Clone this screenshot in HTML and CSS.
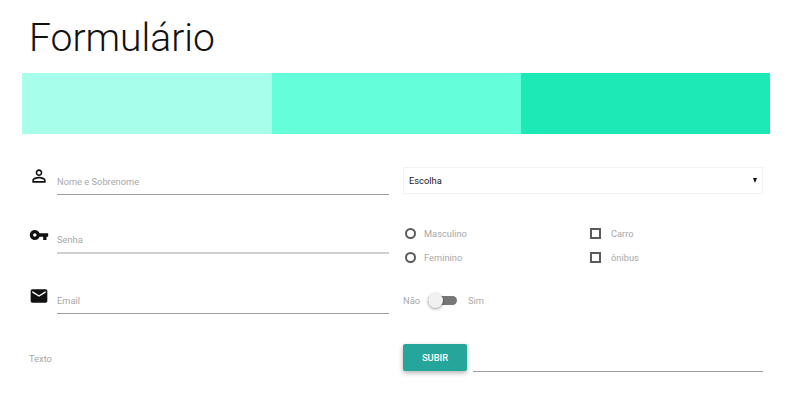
FILE: index.html
```html
<!DOCTYPE html>
<html lang="pt-BR">
<head>
    <meta charset="UTF-8">
    <meta name="viewport" content="width=device-width, initial-scale=1.0">
    <title>Formulário</title>
    <link rel="stylesheet" href="styles.css">
</head>
<body>
    <div class="container">
        <h1>Formulário</h1>
        <div class="bands">
            <div class="band band-light"></div>
            <div class="band band-mid"></div>
            <div class="band band-strong"></div>
        </div>
        <form class="form-grid">
            <div class="cell">
                <svg class="icon icon-person" viewBox="0 0 24 24"><path d="M12 5.9c1.16 0 2.1.94 2.1 2.1s-.94 2.1-2.1 2.1S9.9 9.16 9.9 8s.94-2.1 2.1-2.1m0 9c2.97 0 6.1 1.46 6.1 2.1v1.1H5.9V17c0-.64 3.13-2.1 6.1-2.1M12 4C9.79 4 8 5.79 8 8s1.79 4 4 4 4-1.79 4-4-1.79-4-4-4zm0 9c-2.67 0-8 1.34-8 4v3h16v-3c0-2.66-5.33-4-8-4z"/></svg>
                <input class="field" type="text" placeholder="Nome e Sobrenome">
            </div>
            <div class="cell">
                <div class="select-box">
                    <span>Escolha</span>
                    <span class="arrow"></span>
                </div>
            </div>

            <div class="cell">
                <svg class="icon" viewBox="0 0 24 24"><path d="M12.65 10C11.83 7.67 9.61 6 7 6c-3.31 0-6 2.69-6 6s2.69 6 6 6c2.61 0 4.83-1.67 5.65-4H17v4h4v-4h2v-4H12.65zM7 14c-1.1 0-2-.9-2-2s.9-2 2-2 2 .9 2 2-.9 2-2 2z"/></svg>
                <input class="field field-soft" type="password" placeholder="Senha">
            </div>
            <div class="cell">
                <div class="options">
                    <label class="option"><span class="radio"></span>Masculino</label>
                    <label class="option option-check"><span class="check"></span>Carro</label>
                    <label class="option"><span class="radio"></span>Feminino</label>
                    <label class="option option-check"><span class="check"></span>ônibus</label>
                </div>
            </div>

            <div class="cell">
                <svg class="icon" viewBox="0 0 24 24"><path d="M20 4H4c-1.1 0-1.99.9-1.99 2L2 18c0 1.1.9 2 2 2h16c1.1 0 2-.9 2-2V6c0-1.1-.9-2-2-2zm0 4l-8 5-8-5V6l8 5 8-5v2z"/></svg>
                <input class="field" type="email" placeholder="Email">
            </div>
            <div class="cell">
                <div class="switch">
                    <span>Não</span>
                    <span class="lever"></span>
                    <span>Sim</span>
                </div>
            </div>

            <div class="cell">
                <span class="text-label">Texto</span>
            </div>
            <div class="cell file-row">
                <button class="btn" type="button">SUBIR</button>
                <input class="file-path" type="text">
            </div>
        </form>
    </div>
</body>
</html>
```

FILE: styles.css
```css
* {
    box-sizing: border-box;
    margin: 0;
    padding: 0;
}

body {
    font-family: 'Roboto', sans-serif;
    background-color: #fff;
    color: #a8a8a8;
    font-size: 9.3px;
}

.container {
    padding: 0 30px 0 22px;
}

h1 {
    height: 73px;
    padding: 13px 0 0 7px;
    font-size: 39px;
    font-weight: 300;
    line-height: 50px;
    color: #111;
}

.bands {
    display: flex;
    height: 61px;
}

.band {
    flex: 1;
}

.band-light {
    flex: 0 0 250px;
    background-color: #a7ffeb;
}

.band-mid {
    background-color: #64ffda;
}

.band-strong {
    background-color: #1de9b6;
}

.form-grid {
    display: grid;
    grid-template-columns: 374px 374px;
    grid-template-rows: 58px 61px 58px 40px;
    margin-top: 33px;
}

.cell {
    display: flex;
    align-items: flex-start;
    padding: 0 7px;
}

.icon {
    flex: none;
    width: 20px;
    height: 20px;
    margin-right: 8px;
    fill: #111;
}

.icon-person {
    margin-top: -1px;
}

.field {
    flex: 1;
    min-width: 0;
    height: 28px;
    padding-top: 2px;
    border: none;
    border-bottom: 1px solid #9e9e9e;
    outline: none;
    font-family: inherit;
    font-size: 9.3px;
}

.field::placeholder {
    color: #a8a8a8;
    opacity: 1;
}

.field-soft {
    height: 29px;
    border-bottom: 2px solid #cfcfcf;
}

.select-box {
    display: flex;
    flex: 1;
    justify-content: space-between;
    align-items: center;
    height: 27px;
    padding: 0 5px;
    border: 1px solid #f2f2f2;
    color: #212121;
}

.arrow {
    width: 0;
    height: 0;
    border-left: 2.5px solid transparent;
    border-right: 2.5px solid transparent;
    border-top: 5px solid #111;
}

.options {
    display: grid;
    flex: 1;
    grid-template-columns: 185px 1fr;
    grid-auto-rows: 24px;
}

.option {
    display: flex;
    align-items: center;
    gap: 8px;
    height: 16px;
    padding-left: 2px;
}

.radio {
    width: 11px;
    height: 11px;
    border: 2px solid #5a5a5a;
    border-radius: 50%;
}

.check {
    width: 11px;
    height: 11px;
    border: 2px solid #5a5a5a;
}

.option-check {
    gap: 10px;
}

.switch {
    display: flex;
    align-items: center;
    gap: 8px;
    height: 16px;
    margin-top: 6px;
}

.lever {
    position: relative;
    width: 29px;
    height: 9px;
    margin-right: 3px;
    border-radius: 5px;
    background-color: #777;
}

.lever::after {
    content: "";
    position: absolute;
    left: 0;
    top: -3px;
    width: 15px;
    height: 15px;
    border-radius: 50%;
    background-color: #f1f1f1;
    box-shadow: 0 1px 3px rgba(0, 0, 0, 0.4);
}

.text-label {
    margin-top: 9px;
}

.file-row {
    gap: 6px;
}

.btn {
    flex: none;
    width: 64px;
    height: 27px;
    border: none;
    border-radius: 2px;
    background-color: #26a69a;
    color: #fff;
    font-family: inherit;
    font-size: 9.3px;
    font-weight: 500;
    box-shadow: 0 2px 5px rgba(0, 0, 0, 0.3);
}

.file-path {
    flex: 1;
    min-width: 0;
    height: 28px;
    border: none;
    border-bottom: 1px solid #9e9e9e;
    outline: none;
}
```
